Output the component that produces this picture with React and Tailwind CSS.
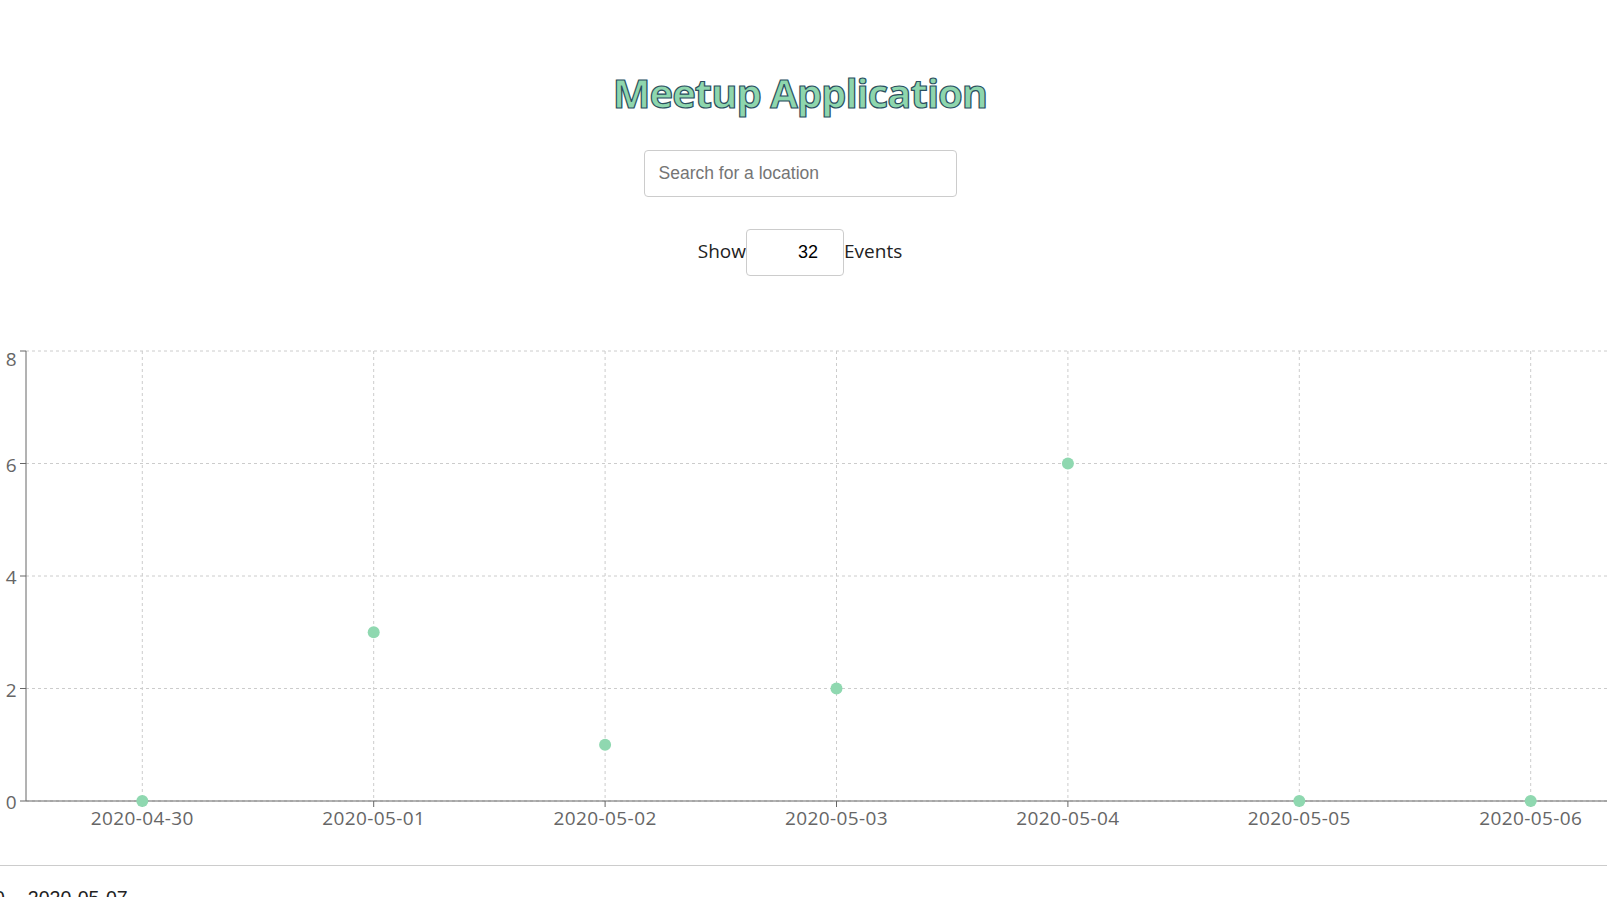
import React from "react";

const dates = ["2020-04-30", "2020-05-01", "2020-05-02", "2020-05-03", "2020-05-04", "2020-05-05", "2020-05-06"];
const values = [0, 3, 1, 2, 6, 0, 0];

function Chart() {
  const top = 21;
  const bottom = 471;
  const left = 26;
  const right = 1607;
  const unit = (bottom - top) / 8;
  const xs = dates.map((_, i) => 142.3 + i * 231.4);
  const yTicks = [0, 2, 4, 6, 8];
  return (
    <svg width="1607" height="500" className="block" fontFamily="'Open Sans', sans-serif">
      {yTicks.map((t) => {
        const y = bottom - t * unit;
        return (
          <line key={"h" + t} x1={left} x2={right} y1={y} y2={y} stroke="#ccc" strokeDasharray="3 3" />
        );
      })}
      {xs.map((x, i) => (
        <line key={"v" + i} x1={x} x2={x} y1={top} y2={bottom} stroke="#ccc" strokeDasharray="3 3" />
      ))}
      <line x1={left} x2={left} y1={top} y2={bottom} stroke="#666" />
      <line x1={left} x2={right} y1={bottom} y2={bottom} stroke="#666" />
      {yTicks.map((t) => {
        const y = bottom - t * unit;
        return (
          <g key={"yt" + t}>
            <line x1={left - 6} x2={left} y1={y} y2={y} stroke="#666" />
            <text x={16.5} y={t === 8 ? y + 14.5 : y + 8} textAnchor="end" fill="#666" fontSize="19">
              {t}
            </text>
          </g>
        );
      })}
      {xs.map((x, i) => (
        <g key={"xt" + i}>
          <line x1={x} x2={x} y1={bottom} y2={bottom + 6} stroke="#666" />
          <text x={x} y={495.3} textAnchor="middle" fill="#666" fontSize="19" letterSpacing="0.4">
            {dates[i]}
          </text>
        </g>
      ))}
      {xs.map((x, i) => (
        <circle key={"d" + i} cx={x} cy={bottom - values[i] * unit} r="6" fill="#8fd8b0" />
      ))}
    </svg>
  );
}

export default function App() {
  return (
    <div className="w-[1607px] h-[897px] overflow-hidden bg-white">
      <div className="w-[1600px] flex flex-col items-center">
        <h1 className="mt-[69px] h-[48px] text-[40px] leading-[48px] tracking-[-1px] font-bold font-['Open_Sans',sans-serif] text-[#8ed6ad] [-webkit-text-stroke:1.2px_#2b4f5f]">
          Meetup Application
        </h1>
        <input
          type="text"
          placeholder="Search for a location"
          className="mt-[33px] w-[313px] h-[47px] rounded-[4px] border border-[#ccc] px-[14px] text-[17.5px] font-['Liberation_Sans',Arial,sans-serif] text-black placeholder:text-[#757575] outline-none"
        />
        <div className="mt-[32px] flex items-center h-[47px] font-['Open_Sans',sans-serif] text-[19px] leading-[26px] text-[#222]">
          <span className="pb-[4px]">Show</span>
          <input
            type="text"
            readOnly
            value="32"
            className="w-[98px] h-[47px] rounded-[4px] border border-[#ccc] pl-[26px] text-center text-[18px] font-['Liberation_Sans',Arial,sans-serif] text-black outline-none"
          />
          <span className="pb-[4px]">Events</span>
        </div>
      </div>
      <div className="mt-[54px]">
        <Chart />
      </div>
      <div className="mt-[35px] h-px bg-[#ccc]" />
      <div className="mt-[22px] flex text-[19.5px] leading-[20px] font-['Liberation_Sans',Arial,sans-serif] text-[#222] whitespace-nowrap">
        <span className="ml-[-6px]">0</span>
        <span className="ml-[23px]">2020-05-07</span>
      </div>
    </div>
  );
}
